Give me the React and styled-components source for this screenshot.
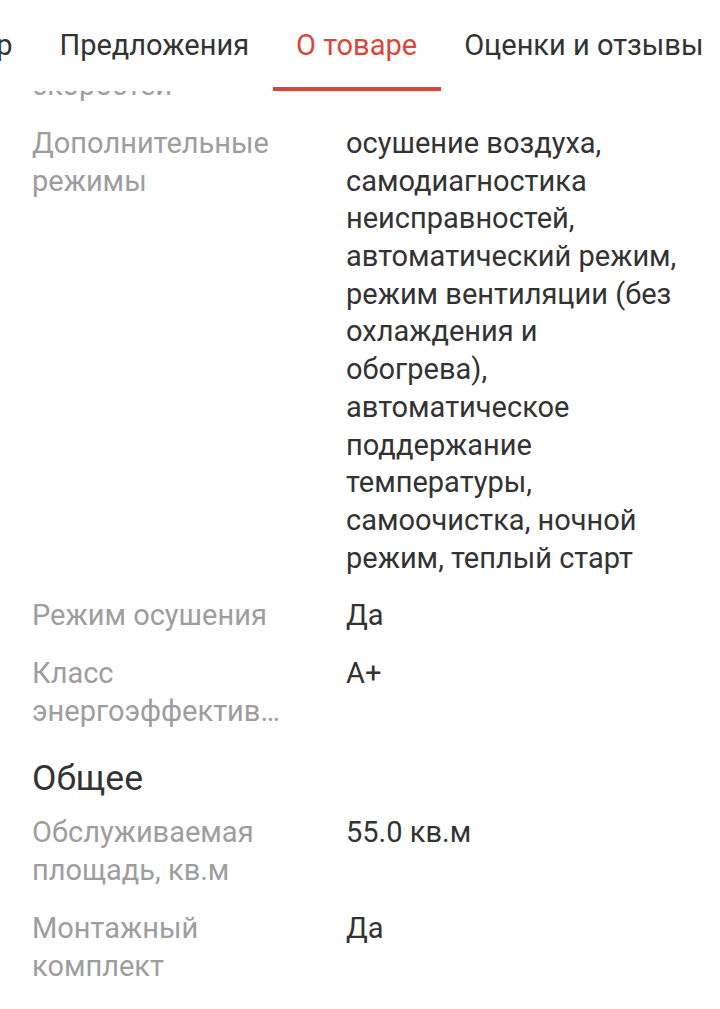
import React from 'react';
import styled, { createGlobalStyle } from 'styled-components';

const GlobalStyle = createGlobalStyle`
  html, body {
    margin: 0;
    padding: 0;
    background: #fff;
  }
  body {
    font-family: Roboto, "Noto Sans", "Liberation Sans", sans-serif;
    -webkit-font-smoothing: antialiased;
  }
`;

const tabs = ['Предложения', 'О товаре', 'Оценки и отзывы'];

const specs = [
  { label: 'Количество скоростей', value: '4' },
  {
    label: 'Дополнительные режимы',
    value:
      'осушение воздуха, самодиагностика неисправностей, автоматический режим, режим вентиляции (без охлаждения и обогрева), автоматическое поддержание температуры, самоочистка, ночной режим, теплый старт',
  },
  { label: 'Режим осушения', value: 'Да' },
  { label: 'Класс энергоэффективности', value: 'A+' },
];

const general = [
  { label: 'Обслуживаемая площадь, кв.м', value: '55.0 кв.м' },
  { label: 'Монтажный комплект', value: 'Да' },
];

const App = () => {
  return (
    <Page>
      <GlobalStyle />
      <TabBar>
        <CutTab>
          <TabText>Обзор</TabText>
        </CutTab>
        {tabs.map((t) => (
          <Tab key={t} $active={t === 'О товаре'}>
            <TabText>{t}</TabText>
          </Tab>
        ))}
      </TabBar>

      <Body>
        <Scroll>
          {specs.map((s) => (
            <Row key={s.label}>
              <Label>{s.label}</Label>
              <Value>{s.value}</Value>
            </Row>
          ))}
          <Heading>Общее</Heading>
          {general.map((s) => (
            <Row key={s.label}>
              <Label>{s.label}</Label>
              <Value>{s.value}</Value>
            </Row>
          ))}
        </Scroll>
      </Body>
    </Page>
  );
};

export default App;

const Page = styled.div`
  width: 720px;
  height: 1009px;
  overflow: hidden;
  display: flex;
  flex-direction: column;
  background: #fff;
`;

const TabBar = styled.div`
  flex: none;
  height: 91px;
  display: flex;
  align-items: stretch;
  white-space: nowrap;
  overflow: hidden;
  background: #fff;
  position: relative;
  z-index: 1;
`;

const CutTab = styled.div`
  flex: none;
  width: 36px;
  overflow: hidden;
  display: flex;
  justify-content: flex-end;
  color: #333;
`;

const Tab = styled.div`
  flex: none;
  position: relative;
  display: flex;
  color: ${(p) => (p.$active ? '#d9473b' : '#333')};
  &::after {
    content: '';
    display: ${(p) => (p.$active ? 'block' : 'none')};
    position: absolute;
    left: 0;
    right: 0;
    bottom: 0;
    height: 4px;
    background: #d9473b;
  }
`;

const TabText = styled.span`
  display: block;
  padding: 0 23.5px;
  font-size: 29px;
  line-height: 90px;
`;

const Body = styled.div`
  flex: 1;
  overflow: hidden;
`;

const Scroll = styled.div`
  margin-top: -71.5px;
  padding: 0 40px 0 32px;
`;

const Row = styled.div`
  display: grid;
  grid-template-columns: 258px 1fr;
  column-gap: 56px;
  padding: 10px 0;
  font-size: 29px;
  line-height: 37.7px;
`;

const Label = styled.div`
  color: #9e9e9e;
  display: -webkit-box;
  -webkit-line-clamp: 2;
  -webkit-box-orient: vertical;
  overflow: hidden;
  text-overflow: ellipsis;
`;

const Value = styled.div`
  color: #333;
`;

const Heading = styled.div`
  font-size: 35.5px;
  line-height: 40px;
  color: #333;
  padding: 18px 0 6px;
`;
